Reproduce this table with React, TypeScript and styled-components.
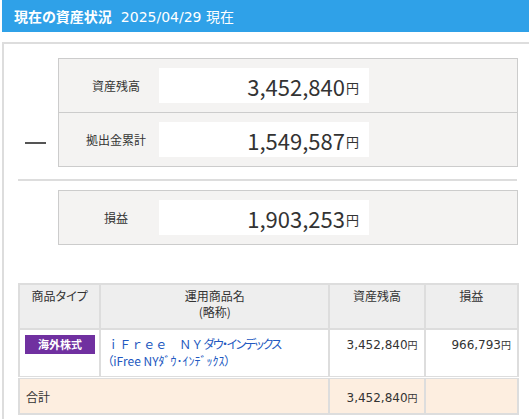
import React from "react";
import styled, { createGlobalStyle } from "styled-components";

const Global = createGlobalStyle`
  html, body { margin: 0; padding: 0; overflow: hidden; background: #fff; }
  body {
    font-family: "Noto Sans CJK JP", "Noto Sans", sans-serif;
    font-feature-settings: "palt";
    color: #333;
  }
`;

const Page = styled.div`
  padding-left: 2px;
`;

const Header = styled.div`
  height: 32px;
  background: #2fa1e8;
  color: #fff;
  display: flex;
  align-items: center;
  padding-left: 12px;
  font-size: 14px;
  gap: 9px;
`;

const Title = styled.span`
  font-weight: bold;
`;

const DateText = styled.span`
  font-family: "DejaVu Sans", "Noto Sans CJK JP", sans-serif;
`;

const Panel = styled.div`
  margin-top: 10px;
  border: 2px solid #ddd;
  border-right: none;
  padding: 14px 0 6px 14px;
`;

const Content = styled.div`
  width: 501px;
`;

const SummaryRow = styled.div`
  display: flex;
`;

const Operator = styled.div`
  width: 40px;
  display: flex;
  align-items: flex-end;
  padding-bottom: 23px;
`;

const Minus = styled.div`
  width: 21px;
  height: 2px;
  background: #555;
  margin-left: 7px;
`;

const Box = styled.div`
  width: 458px;
  border: 1px solid #ccc;
  background: #f4f3f2;
`;

const BoxRow = styled.div`
  display: flex;
  align-items: center;
  height: 53px;
  & + & { border-top: 1px solid #ccc; }
`;

const Label = styled.div`
  width: 86px;
  padding-left: 14px;
  text-align: center;
  font-size: 12px;
  color: #333;
`;

const ValueBox = styled.div`
  width: 200px;
  height: 35px;
  background: #fff;
  display: flex;
  align-items: center;
  justify-content: flex-end;
  padding-right: 10px;
  font-size: 22px;
  color: #333;
`;

const Yen = styled.span`
  font-size: 13px;
  margin-left: 1px;
  position: relative;
  top: 2px;
`;

const Num = styled.span`
  font-family: "DejaVu Sans", "Noto Sans CJK JP", sans-serif;
  font-size: 12px;
`;

const SmallYen = styled.span`
  font-size: 10px;
`;

const Separator = styled.div`
  height: 2px;
  background: #ddd;
  width: 499px;
  margin: 12px 0 9px;
`;

const Table = styled.table`
  margin-top: 38px;
  width: 501px;
  border-collapse: collapse;
  border: 2px solid #ddd;
  table-layout: fixed;
  font-size: 12px;
`;

const Th = styled.th<{ $w: number }>`
  width: ${(p) => p.$w}px;
  background: #eee;
  border: 2px solid #ddd;
  font-weight: normal;
  color: #333;
  height: 40px;
  vertical-align: top;
  padding: 3px 0 0;
  line-height: 16px;
`;

const Td = styled.td<{ $align?: string }>`
  border: 2px solid #ddd;
  vertical-align: top;
  text-align: ${(p) => p.$align ?? "left"};
  padding: 5px 6px 0;
  height: 41px;
  color: #333;
  line-height: 17px;
`;

const TotalTd = styled.td<{ $align?: string }>`
  border: 2px solid #ddd;
  border-top: 3px double #ddd;
  background: #fdeee0;
  text-align: ${(p) => p.$align ?? "left"};
  padding: 0 6px;
  height: 34px;
  color: #333;
`;

const Badge = styled.span`
  display: block;
  width: 70px;
  height: 19px;
  margin: 0 0 0 -1px;
  background: #7030a0;
  color: #fff;
  font-size: 11px;
  font-weight: bold;
  text-align: center;
  line-height: 19px;
`;

const FundName = styled.div`
  color: #2258c0;
`;

const FullWidth = styled.span`
  font-feature-settings: normal;
`;

const Kana = styled.span`
  letter-spacing: -1.5px;
`;

const summary = [
  { label: "資産残高", value: "3,452,840" },
  { label: "拠出金累計", value: "1,549,587" },
];

export default function App() {
  return (
    <>
      <Global />
      <Page>
        <Header>
          <Title>現在の資産状況</Title>
          <DateText>2025/04/29 現在</DateText>
        </Header>
        <Panel>
          <Content>
            <SummaryRow>
              <Operator>
                <Minus />
              </Operator>
              <Box>
                {summary.map((s) => (
                  <BoxRow key={s.label}>
                    <Label>{s.label}</Label>
                    <ValueBox>
                      {s.value}
                      <Yen>円</Yen>
                    </ValueBox>
                  </BoxRow>
                ))}
              </Box>
            </SummaryRow>
            <Separator />
            <SummaryRow>
              <Operator />
              <Box>
                <BoxRow>
                  <Label>損益</Label>
                  <ValueBox>
                    1,903,253<Yen>円</Yen>
                  </ValueBox>
                </BoxRow>
              </Box>
            </SummaryRow>
            <Table>
              <thead>
                <tr>
                  <Th $w={79}>商品タイプ</Th>
                  <Th $w={226}>
                    運用商品名
                    <br />
                    (略称)
                  </Th>
                  <Th $w={93}>資産残高</Th>
                  <Th $w={91}>損益</Th>
                </tr>
              </thead>
              <tbody>
                <tr>
                  <Td>
                    <Badge>海外株式</Badge>
                  </Td>
                  <Td>
                    <FundName>
                      <FullWidth>ｉＦｒｅｅ　ＮＹ</FullWidth>
                      <Kana>ダウ・インデックス</Kana>
                      <br />
                      （iFree NYﾀﾞｳ･ｲﾝﾃﾞｯｸｽ）
                    </FundName>
                  </Td>
                  <Td $align="right">
                    <Num>3,452,840</Num>
                    <SmallYen>円</SmallYen>
                  </Td>
                  <Td $align="right">
                    <Num>966,793</Num>
                    <SmallYen>円</SmallYen>
                  </Td>
                </tr>
                <tr>
                  <TotalTd colSpan={2}>合計</TotalTd>
                  <TotalTd $align="right">
                    <Num>3,452,840</Num>
                    <SmallYen>円</SmallYen>
                  </TotalTd>
                  <TotalTd />
                </tr>
              </tbody>
            </Table>
          </Content>
        </Panel>
      </Page>
    </>
  );
}
